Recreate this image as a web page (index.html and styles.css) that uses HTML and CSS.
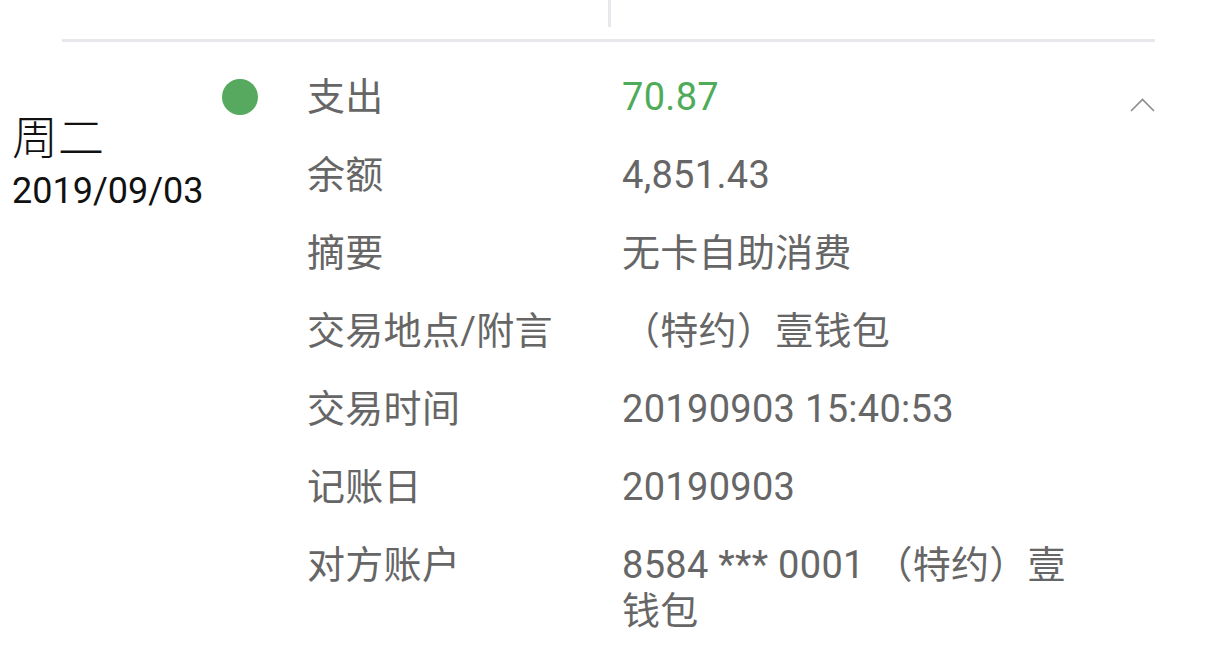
FILE: index.html
```html
<!DOCTYPE html>
<html lang="zh-CN">
<head>
<meta charset="utf-8">
<link rel="stylesheet" href="styles.css">
</head>
<body>
<div class="top">
  <div class="top-sep"></div>
</div>
<div class="divider"></div>
<div class="record">
  <div class="date-col">
    <div class="weekday">周二</div>
    <div class="date">2019/09/03</div>
  </div>
  <div class="dot-col"><span class="dot"></span></div>
  <div class="details">
    <div class="label">支出</div>
    <div class="value amount">70.87</div>
    <div class="label">余额</div>
    <div class="value">4,851.43</div>
    <div class="label">摘要</div>
    <div class="value">无卡自助消费</div>
    <div class="label">交易地点/附言</div>
    <div class="value">（特约）壹钱包</div>
    <div class="label">交易时间</div>
    <div class="value">20190903 15:40:53</div>
    <div class="label">记账日</div>
    <div class="value">20190903</div>
    <div class="label">对方账户</div>
    <div class="value">8584 *** 0001 （特约）壹钱包</div>
  </div>
  <div class="chev-col">
    <svg class="chev" width="25" height="14" viewBox="0 0 25 14"><path d="M1 13 L12.5 1.5 L24 13" fill="none" stroke="#8c8c8c" stroke-width="1.6"/></svg>
  </div>
</div>
</body>
</html>
```
FILE: styles.css
```css
html, body {
  margin: 0;
  padding: 0;
  background: #fff;
}
body {
  font-family: Roboto, "Noto Sans CJK SC", sans-serif;
  width: 1229px;
  height: 659px;
  overflow: hidden;
}
.top {
  height: 39px;
}
.top-sep {
  margin-left: 608px;
  width: 3px;
  height: 27px;
  background: #e8e8ec;
}
.divider {
  margin-left: 62px;
  width: 1093px;
  height: 3px;
  background: #e8e8ec;
}
.record {
  display: flex;
  padding-top: 16px;
}
.date-col {
  width: 222px;
  padding-left: 12px;
  box-sizing: border-box;
  padding-top: 55px;
  color: #111;
}
.weekday {
  font-size: 46px;
  line-height: 50px;
  font-weight: 300;
}
.date {
  margin-top: 8px;
  font-size: 36px;
  line-height: 40px;
  white-space: nowrap;
}
.dot-col {
  width: 85px;
  padding-top: 21px;
}
.dot {
  display: block;
  width: 36px;
  height: 36px;
  border-radius: 50%;
  background: #56a95f;
}
.details {
  display: grid;
  grid-template-columns: 315px 460px;
  grid-auto-rows: minmax(78px, auto);
  color: #666;
  font-size: 38px;
  line-height: 46px;
  letter-spacing: 0.3px;
}
.label, .value {
  padding: 16px 0;
}
.label {
  white-space: nowrap;
}
.amount {
  color: #4eab5a;
}
.chev-col {
  padding-top: 40px;
  padding-left: 48px;
}
.chev {
  display: block;
}
```
